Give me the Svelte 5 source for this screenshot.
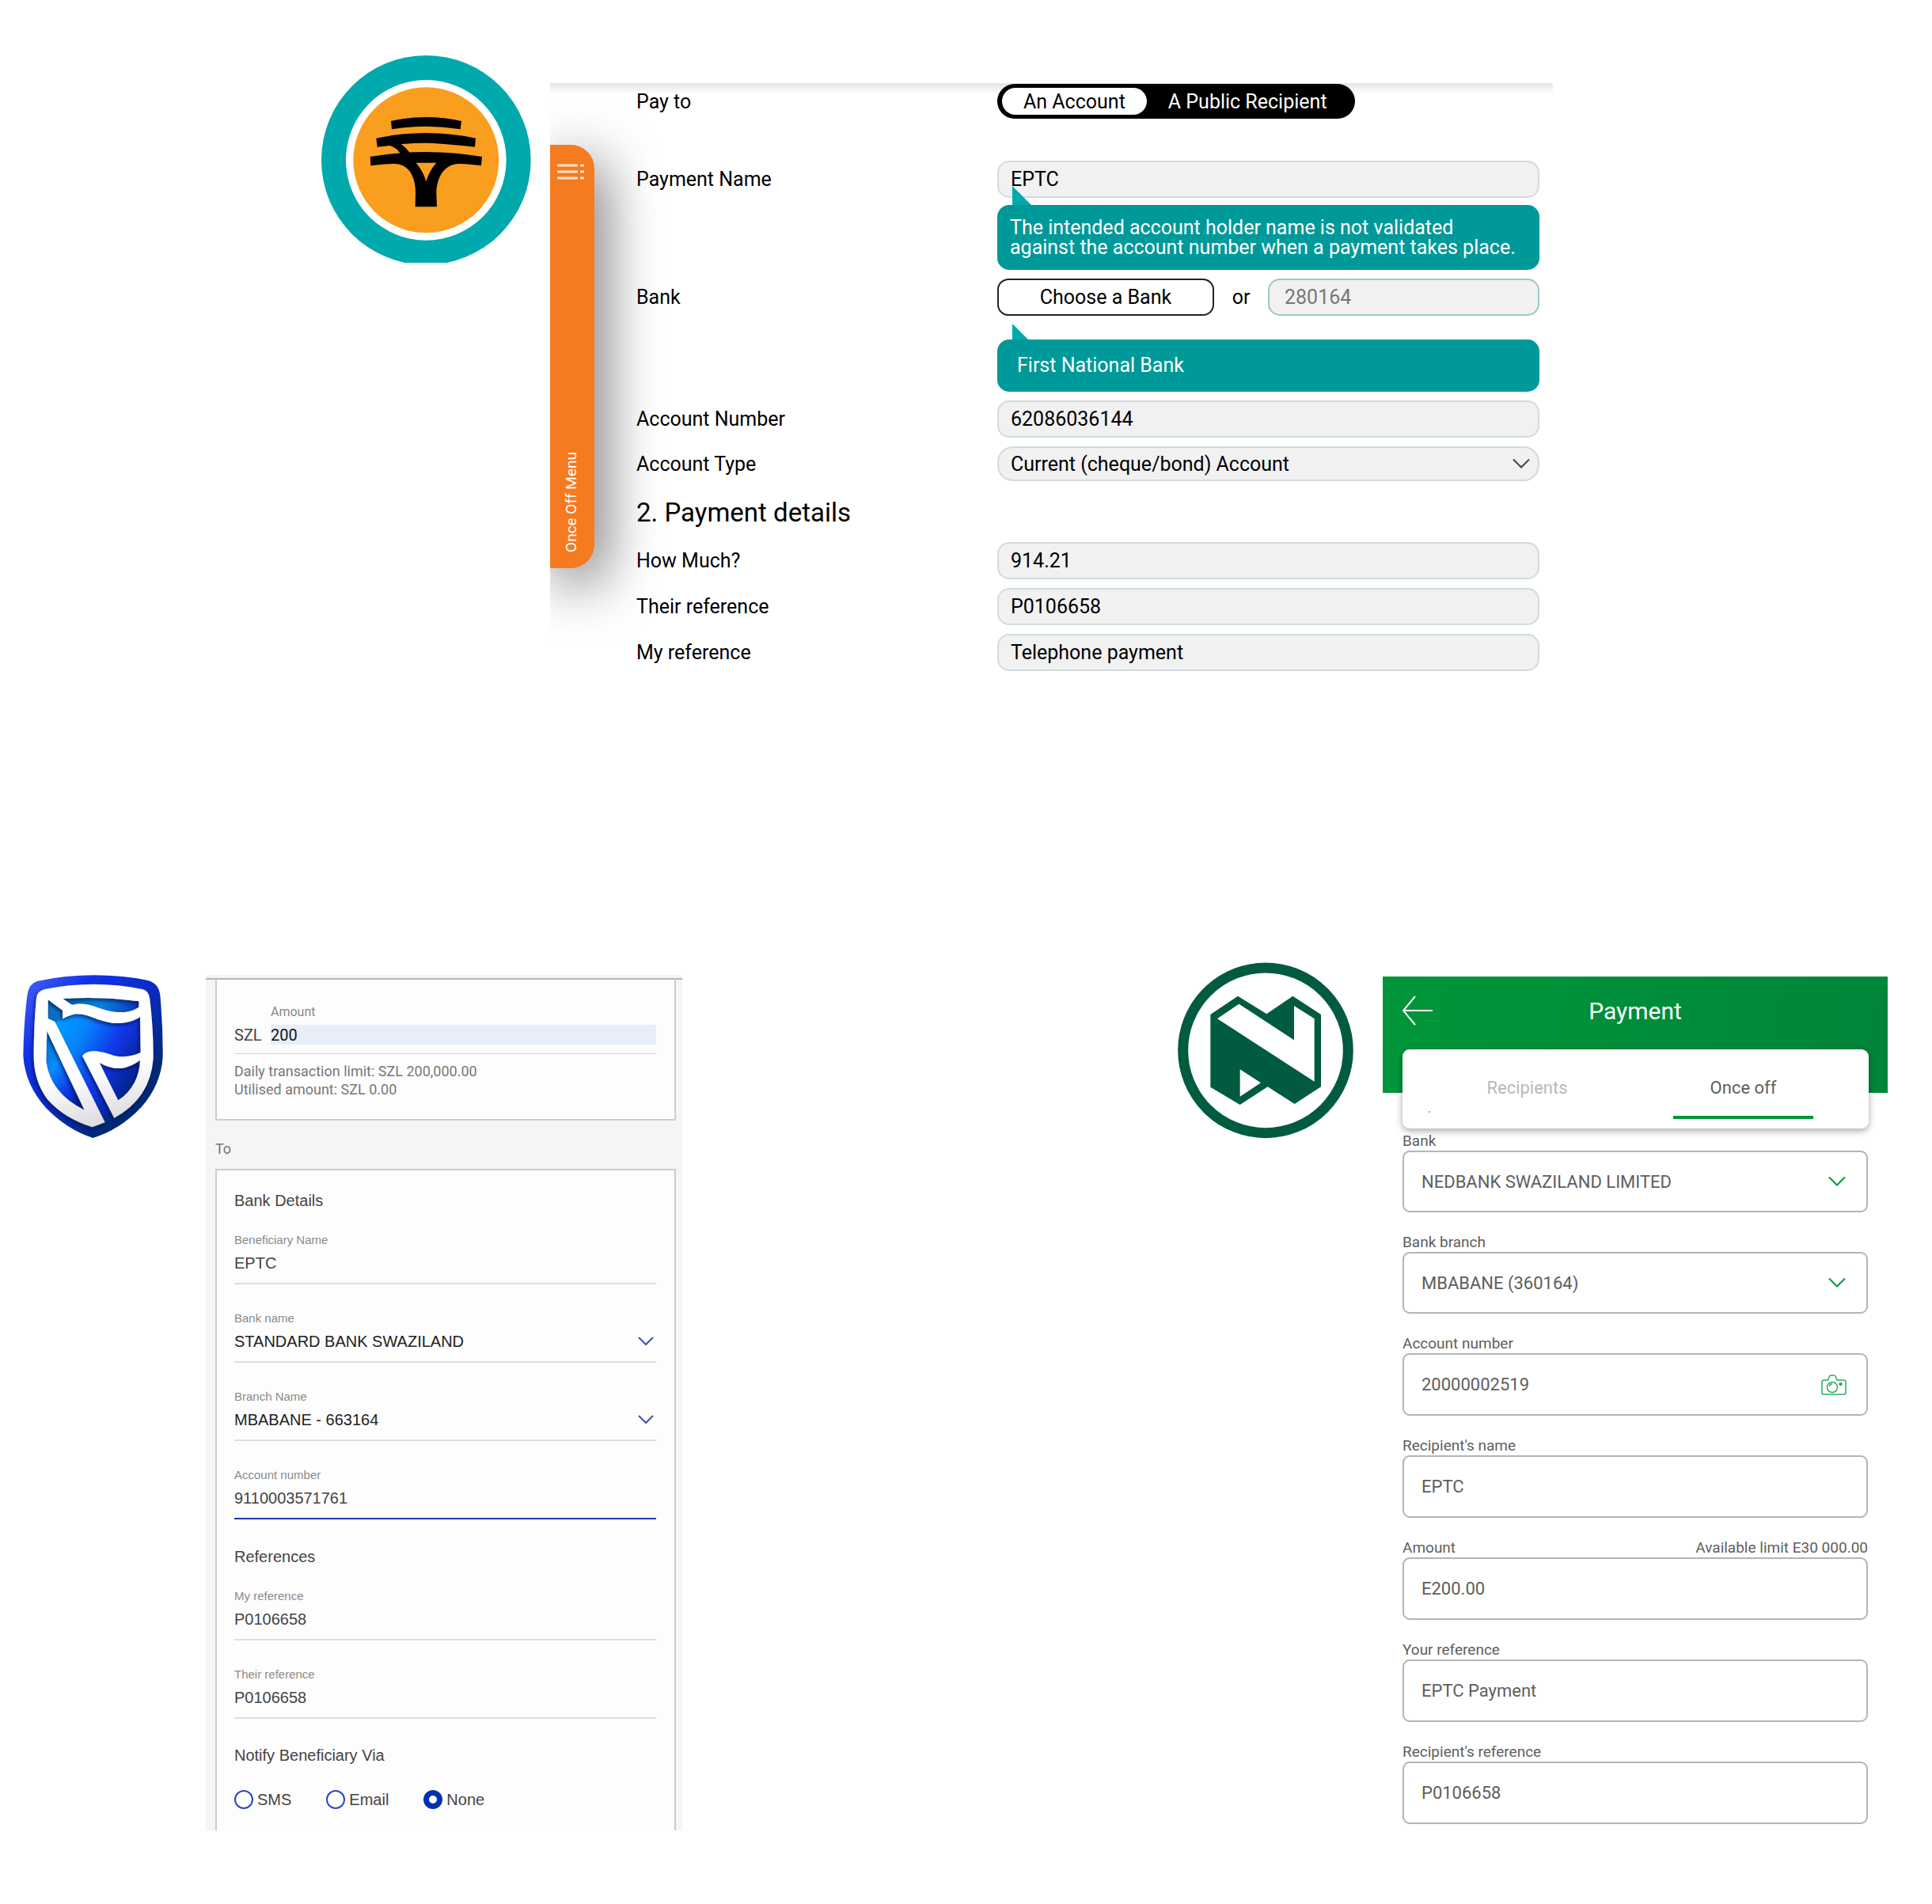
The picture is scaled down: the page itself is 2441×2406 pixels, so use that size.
<script>
  let payTo = $state('account');
  let accountType = $state('Current (cheque/bond) Account');
  let notify = $state('None');

  const paymentDetails = [
    { id: 'fnb-amount', label: 'How Much?', value: '914.21' },
    { id: 'fnb-their-ref', label: 'Their reference', value: 'P0106658' },
    { id: 'fnb-my-ref', label: 'My reference', value: 'Telephone payment' }
  ];

  const bankDetails = [
    { id: 'sb-name', label: 'Beneficiary Name', value: 'EPTC' },
    { id: 'sb-bank', label: 'Bank name', value: 'STANDARD BANK SWAZILAND', select: true },
    { id: 'sb-branch', label: 'Branch Name', value: 'MBABANE - 663164', select: true },
    { id: 'sb-account', label: 'Account number', value: '9110003571761', active: true }
  ];

  const references = [
    { id: 'sb-my-ref', label: 'My reference', value: 'P0106658' },
    { id: 'sb-their-ref', label: 'Their reference', value: 'P0106658' }
  ];

  const nedbankFields = [
    { id: 'ned-bank', label: 'Bank', value: 'NEDBANK SWAZILAND LIMITED', select: true },
    { id: 'ned-branch', label: 'Bank branch', value: 'MBABANE (360164)', select: true },
    { id: 'ned-account', label: 'Account number', value: '20000002519', camera: true },
    { id: 'ned-name', label: "Recipient's name", value: 'EPTC' },
    { id: 'ned-amount', label: 'Amount', value: 'E200.00', note: 'Available limit E30 000.00' },
    { id: 'ned-your-ref', label: 'Your reference', value: 'EPTC Payment' },
    { id: 'ned-their-ref', label: "Recipient's reference", value: 'P0106658' }
  ];
</script>

{#snippet lineField(f)}
  <div class="line-field" class:active={f.active}>
    <label for={f.id}>{f.label}</label>
    {#if f.select}
      <div class="select-wrap">
        <select id={f.id}><option>{f.value}</option></select>
        <svg class="chevron" viewBox="0 0 20 12" width="20" height="12" aria-hidden="true"><path d="M1 1l9 9 9-9" /></svg>
      </div>
    {:else}
      <input id={f.id} type="text" value={f.value} />
    {/if}
  </div>
{/snippet}

<main class="page">
  <section class="top">
    <svg class="fnb-logo" viewBox="48 60 795 786" role="img" aria-label="First National Bank">
      <circle cx="445" cy="457" r="397" fill="#00a9ac" />
      <circle cx="445" cy="457" r="304" fill="#fff" />
      <circle cx="445" cy="457" r="276" fill="#fa9e20" />
      <path d="M312 309Q445 279 579 309L575 340Q445 318 315 340Z" />
      <path d="M256 374Q445 334 633 374L630 407Q490 392 445 392Q400 392 350 396Q368 408 383 428L348 432Q330 408 308 402L260 407Z" />
      <path fill-rule="evenodd" d="M233 444Q445 408 657 444L654 478Q610 472 575 471C520 468 486 515 484 580L486 634H404L405 580C405 515 375 468 320 471Q280 472 235 478ZM407 467Q435 500 445 538Q455 500 484 467Z" />
    </svg>

    <div class="fnb">
      <button class="side-menu" type="button">
        <svg viewBox="0 0 34 20" width="34" height="20" aria-hidden="true">
          <path d="M0 2h26M29 2h5M0 10h26M29 10h5M0 18h26M29 18h5" stroke="#ffe3cf" stroke-width="3" />
        </svg>
        <span>Once Off Menu</span>
      </button>

      <form class="fnb-form">
        <div class="row pay-to">
          <span class="caption" id="pay-to">Pay to</span>
          <div class="toggle" role="group" aria-labelledby="pay-to">
            <button type="button" class:on={payTo === 'account'} onclick={() => (payTo = 'account')}>An Account</button>
            <button type="button" class:on={payTo === 'public'} onclick={() => (payTo = 'public')}>A Public Recipient</button>
          </div>
        </div>

        <div class="row">
          <label for="fnb-name">Payment Name</label>
          <input id="fnb-name" type="text" value="EPTC" />
        </div>
        <p class="tip name-tip">
          <svg viewBox="0 0 24 24" width="24" height="24" aria-hidden="true"><path d="M0 0V24H24Z" /></svg>
          The intended account holder name is not validated<br />against the account number when a payment takes place.
        </p>

        <div class="row">
          <label for="fnb-bank">Bank</label>
          <div class="bank-row">
            <button class="choose" type="button">Choose a Bank</button>
            <span>or</span>
            <input id="fnb-bank" class="code" type="text" value="280164" />
          </div>
        </div>
        <p class="tip bank-tip">
          <svg viewBox="0 0 20 20" width="20" height="20" aria-hidden="true"><path d="M0 0V20H20Z" /></svg>
          First National Bank
        </p>

        <div class="row">
          <label for="fnb-account">Account Number</label>
          <input id="fnb-account" type="text" value="62086036144" />
        </div>
        <div class="row">
          <label for="fnb-type">Account Type</label>
          <div class="select-wrap">
            <select id="fnb-type" bind:value={accountType}><option>Current (cheque/bond) Account</option></select>
            <svg class="chevron" viewBox="0 0 22 13" width="22" height="13" aria-hidden="true"><path d="M1 1l10 10L21 1" /></svg>
          </div>
        </div>

        <h2>2. Payment details</h2>
        {#each paymentDetails as f}
          <div class="row">
            <label for={f.id}>{f.label}</label>
            <input id={f.id} type="text" value={f.value} />
          </div>
        {/each}
      </form>
    </div>
  </section>

  <section class="bottom">
    <svg class="sb-logo" viewBox="57 63 531 618" role="img" aria-label="Standard Bank">
      <defs>
        <linearGradient id="sb-outer" x1="0" y1="0" x2="1" y2="1">
          <stop offset="0" stop-color="#4a63fa" />
          <stop offset="0.25" stop-color="#1233e6" />
          <stop offset="0.5" stop-color="#0a2bc4" />
          <stop offset="0.75" stop-color="#002a78" />
          <stop offset="1" stop-color="#00205c" />
        </linearGradient>
        <linearGradient id="sb-inner" gradientUnits="userSpaceOnUse" x1="190" y1="260" x2="510" y2="440">
          <stop offset="0" stop-color="#0099ff" />
          <stop offset="0.25" stop-color="#0684fb" />
          <stop offset="0.6" stop-color="#1236ea" />
          <stop offset="1" stop-color="#001f80" />
        </linearGradient>
        <linearGradient id="sb-top" x1="0" y1="0" x2="1" y2="0">
          <stop offset="0" stop-color="#005fae" />
          <stop offset="0.5" stop-color="#0583dc" />
          <stop offset="1" stop-color="#0d2fb4" />
        </linearGradient>
        <linearGradient id="sb-left" x1="0" y1="0" x2="0.6" y2="1">
          <stop offset="0" stop-color="#0069b8" />
          <stop offset="0.45" stop-color="#0a8cff" />
          <stop offset="0.8" stop-color="#0e35e0" />
          <stop offset="1" stop-color="#001f90" />
        </linearGradient>
        <linearGradient id="sb-white" x1="0.4" y1="0" x2="0.6" y2="1">
          <stop offset="0.6" stop-color="#fff" />
          <stop offset="1" stop-color="#d9d9de" />
        </linearGradient>
        <filter id="sb-shadow" x="-10%" y="-10%" width="120%" height="120%">
          <feDropShadow dx="-4" dy="8" stdDeviation="7" flood-color="#00124e" flood-opacity="0.7" />
        </filter>
      </defs>
      <path fill="url(#sb-outer)" d="M112 86Q220 64 325 64Q440 64 532 84Q572 96 577 140Q588 260 587 375Q580 480 505 565Q425 650 322 681Q225 650 145 568Q65 480 58 370Q60 240 74 135Q80 96 112 86Z" />
      <path fill="url(#sb-inner)" d="M125 135Q325 95 520 135L535 380L470 540L385 600L320 620L180 540L115 400Z" />
      <path fill="url(#sb-top)" d="M200 145Q350 135 505 155V200C470 215 440 215 415 212C350 205 310 170 235 180Z" />
      <path fill="url(#sb-left)" d="M140 255L300 590Q160 530 138 390Z" />
      <path fill="#0a6fc4" d="M150 150L207 190V230L175 245L150 232Z" />
      <path filter="url(#sb-shadow)" fill="url(#sb-white)" fill-rule="evenodd" d="M108 150Q112 123 140 117Q325 80 510 117Q535 123 538 155Q552 270 551 380Q540 530 403 605L282 370Q288 360 300 356C330 346 360 355 400 368C435 377 470 372 503 357L501 222C475 240 440 248 400 246C340 240 300 205 250 212Q225 218 207 229V197L152 157V228L178 240L368 622L320 640Q215 608 150 535Q98 465 98 370Q98 250 108 150ZM208 153Q350 143 497 163L496 185C470 203 440 205 415 204C350 200 310 160 243 176ZM148 275L290 575Q160 510 145 390ZM347 396Q390 420 430 417Q470 410 501 386Q500 430 480 470Q455 515 418 538Z" />
    </svg>

    <div class="sb">
      <div class="sb-card amount-card">
        <div class="amount">
          <label for="sb-amount">Amount</label>
          <span class="currency">SZL</span>
          <input id="sb-amount" type="text" value="200" />
        </div>
        <p>Daily transaction limit: SZL 200,000.00<br />Utilised amount: SZL 0.00</p>
      </div>

      <p class="to">To</p>

      <form class="sb-card details-card">
        <h3>Bank Details</h3>
        {#each bankDetails as f}{@render lineField(f)}{/each}
        <h3>References</h3>
        {#each references as f}{@render lineField(f)}{/each}
        <fieldset>
          <legend>Notify Beneficiary Via</legend>
          <div class="radios">
            {#each ['SMS', 'Email', 'None'] as option}
              <label><input type="radio" name="notify" value={option} bind:group={notify} />{option}</label>
            {/each}
          </div>
        </fieldset>
      </form>
    </div>

    <svg class="ned-logo" viewBox="54 44 666 668" role="img" aria-label="Nedbank">
      <circle cx="387" cy="378" r="313" fill="none" stroke="#005b41" stroke-width="39" />
      <path fill="#005b41" fill-rule="evenodd" d="M178 242L282 172L391 240L490 172L597 242V516L497 581L395 516L290 584L178 517ZM204 258L572 496V258L495 209V339L286 202ZM290 450V553L369 501Z" />
    </svg>

    <div class="ned">
      <header>
        <button type="button" aria-label="Back">
          <svg viewBox="0 0 38 38" width="38" height="38" aria-hidden="true"><path d="M16 1L1 19L16 37M1 19H38" /></svg>
        </button>
        <h1>Payment</h1>
      </header>
      <nav class="tabs">
        <button type="button">Recipients</button>
        <button type="button" class="current" aria-current="page">Once off</button>
      </nav>
      <form class="ned-form">
        {#each nedbankFields as f}
          <div class="ned-field">
            <div class="ned-label">
              <label for={f.id}>{f.label}</label>
              {#if f.note}<span>{f.note}</span>{/if}
            </div>
            <div class="select-wrap">
              {#if f.select}
                <select id={f.id}><option>{f.value}</option></select>
                <svg class="chevron" viewBox="0 0 22 13" width="22" height="13" aria-hidden="true"><path d="M1 1l10 10L21 1" /></svg>
              {:else}
                <input id={f.id} type="text" value={f.value} />
              {/if}
              {#if f.camera}
                <svg class="camera" viewBox="0 0 32 26" width="32" height="26" aria-hidden="true">
                  <path d="M3 7h5.500l1.500-4q.7-2 2.500-2h3.500q1.800 0 2.500 2l1.500 4h9q2 0 2 2v14q0 2-2 2H3q-2 0-2-2V9q0-2 2-2z" />
                  <circle cx="14" cy="16" r="6.500" />
                  <path d="M10.500 15q.5-3 3.500-3.500" />
                  <circle cx="24.500" cy="12" r="1.500" class="dot" />
                </svg>
              {/if}
            </div>
          </div>
        {/each}
      </form>
    </div>
  </section>
</main>

<style>
  :global(body) {
    background: #fff;
  }
  .page,
  .page * {
    box-sizing: border-box;
  }
  .page {
    font-family: Roboto, sans-serif;
    padding: 70px 0 90px;
  }
  p,
  h1,
  h2,
  h3 {
    margin: 0;
    font-weight: 400;
  }
  button,
  input,
  select {
    font: inherit;
    color: inherit;
    margin: 0;
    padding: 0;
    border: 0;
    background: none;
    outline: none;
    min-width: 0;
  }
  button {
    cursor: pointer;
  }
  select {
    appearance: none;
    width: 100%;
  }
  svg {
    display: block;
  }
  .select-wrap {
    position: relative;
  }
  .chevron {
    position: absolute;
    top: 50%;
    translate: 0 -50%;
    fill: none;
    stroke-width: 2;
    pointer-events: none;
  }

  /* First National Bank */
  .top {
    display: grid;
    grid-template-columns: 406fr 265fr 24fr 1267fr 479fr;
    align-items: start;
    margin-bottom: 365px;
  }
  .fnb-logo {
    grid-column: 2;
    width: 100%;
  }
  .fnb {
    grid-column: 4;
    margin-top: 35px;
    display: grid;
    grid-template-columns: 56px 1fr;
    gap: 53px;
    padding: 1px 17px 3px 0;
    overflow: hidden;
    background: linear-gradient(#e4e4e4, #fff 14px);
    font-size: 25px;
    color: #000;
  }
  .side-menu {
    margin: 77px 0 130px;
    background: #f57b20;
    border-radius: 0 30px 30px 0;
    box-shadow: 10px 20px 70px rgba(0, 0, 0, 0.6);
    display: flex;
    flex-direction: column;
    align-items: center;
    justify-content: space-between;
    padding: 24px 4px 20px 0;
    color: #fff;
    font-size: 19px;
  }
  .side-menu span {
    writing-mode: sideways-lr;
  }
  .fnb-form {
    position: relative;
    display: flex;
    flex-direction: column;
    gap: 11px;
  }
  .row {
    display: grid;
    grid-template-columns: 456px 1fr;
    align-items: center;
  }
  .pay-to {
    margin-bottom: 42px;
  }
  .toggle {
    justify-self: start;
    display: flex;
    padding: 5px 8px 5px 6px;
    height: 44px;
    border-radius: 22px;
    background: #000;
    color: #fff;
  }
  .toggle button {
    padding: 0 27px;
    border-radius: 17px;
  }
  .toggle .on {
    background: #fff;
    color: #000;
  }
  .row > input,
  .code {
    height: 47px;
    width: 100%;
    padding: 0 15px;
    border: 2px solid #d0dbde;
    border-radius: 15px;
    background: #f1f1f1;
  }
  .row select {
    height: 44px;
    padding: 0 15px;
    border: 2px solid #d0dbde;
    border-radius: 20px;
    background: #f1f1f1;
  }
  .row .chevron {
    right: 12px;
    stroke: #444;
  }
  .tip {
    position: relative;
    margin-left: 456px;
    border-radius: 15px;
    background: #009999;
    color: #fff;
    line-height: 25px;
  }
  .tip svg {
    position: absolute;
    left: 19px;
    bottom: 100%;
    fill: #00a9ac;
  }
  .name-tip {
    margin-top: -2px;
    padding: 16px 16px;
  }
  .bank-tip {
    margin-top: 19px;
    padding: 20px 25px 21px;
  }
  .bank-row {
    display: grid;
    grid-template-columns: 274fr 68fr 343fr;
    align-items: center;
    text-align: center;
  }
  .choose {
    height: 47px;
    border: 2px solid #222;
    border-radius: 14px;
  }
  .code {
    padding: 0 19px;
    border-color: #9cc7c7;
    color: #777;
  }
  h2 {
    margin: 9px 0 6px;
    font-size: 33px;
    line-height: 40px;
  }

  /* Lower row */
  .bottom {
    display: grid;
    grid-template-columns: 29fr 177fr 54fr 602fr 626fr 222fr 37fr 638fr 56fr;
    align-items: start;
  }

  /* Standard Bank */
  .sb-logo {
    grid-column: 2;
    width: 100%;
    margin-top: 16px;
  }
  .sb {
    grid-column: 4;
    margin-top: 16px;
    padding: 4px 8px 0 12px;
    background: linear-gradient(#f5f5f5 4px, #b4b4b4 4px, #b4b4b4 6px, #f5f5f5 6px);
    font-family: 'Liberation Sans', Arial, sans-serif;
    font-size: 20px;
    color: #444;
  }
  .sb-card {
    border: 2px solid #ccc;
    background: #fdfdfd;
    padding: 0 23px 0 22px;
  }
  .amount-card {
    border-top-color: #b4b4b4;
    padding-top: 29px;
    padding-bottom: 26px;
    font-family: Roboto, sans-serif;
  }
  .amount {
    display: grid;
    grid-template-columns: 46px 1fr;
    align-items: center;
    padding-bottom: 11px;
    border-bottom: 1px solid #d4d4d4;
  }
  .amount label {
    grid-column: 2;
    font-size: 16px;
    line-height: 24px;
    margin-bottom: 4px;
    color: #888;
  }
  .amount input {
    height: 25px;
    background: #e7eefb;
    color: #111;
  }
  .amount-card p {
    margin-top: 10px;
    font-size: 18px;
    line-height: 23px;
    color: #777;
  }
  .to {
    font-family: Roboto, sans-serif;
    font-size: 18px;
    line-height: 23px;
    padding: 24px 0 14px;
    color: #777;
  }
  .details-card {
    border-bottom: 0;
    padding-top: 26px;
  }
  h3,
  legend {
    font-size: 20px;
    line-height: 24px;
  }
  h3 {
    margin-bottom: 26px;
  }
  .line-field {
    border-bottom: 2px solid #dedede;
    padding-bottom: 13px;
    margin-bottom: 31px;
  }
  .line-field.active {
    border-bottom-color: #2037b0;
    margin-bottom: 35px;
  }
  .line-field > label {
    display: block;
    font-size: 15px;
    line-height: 24px;
    margin-bottom: 5px;
    color: #8a8a8a;
  }
  .line-field input,
  .line-field select {
    display: block;
    width: 100%;
    height: 24px;
  }
  .line-field select {
    color: #222;
  }
  .line-field .chevron {
    right: 3px;
    stroke: #3850b8;
  }
  fieldset {
    border: 0;
    margin: 0;
    padding: 0 0 26px;
  }
  legend {
    padding: 3px 0 31px;
  }
  .radios {
    display: flex;
    gap: 44px;
  }
  .radios label {
    display: flex;
    align-items: center;
    gap: 5px;
    line-height: 26px;
  }
  .radios input {
    appearance: none;
    width: 24px;
    height: 24px;
    border: 2px solid #2e48b8;
    border-radius: 50%;
    background: #fff;
  }
  .radios input:checked {
    border: 7px solid #0430b0;
  }

  /* Nedbank */
  .ned-logo {
    grid-column: 6;
    width: 100%;
  }
  .ned {
    grid-column: 8;
    margin-top: 18px;
    color: #5e5e5e;
    font-size: 22px;
  }
  .ned header {
    height: 147px;
    padding: 24px 25px 0;
    background: linear-gradient(100deg, #009639, #00853a);
    color: #fff;
    display: grid;
    grid-template-columns: 38px 1fr 38px;
    align-items: start;
  }
  header path {
    fill: none;
    stroke: #fff;
    stroke-width: 2;
  }
  h1 {
    font-size: 30px;
    line-height: 40px;
    text-align: center;
  }
  .tabs {
    position: relative;
    display: flex;
    justify-content: space-around;
    gap: 96px;
    height: 100px;
    margin: -55px 24px 0 25px;
    padding: 0 70px 0 69px;
    border-radius: 9px;
    background: #fff;
    box-shadow: 0 3px 10px rgba(0, 0, 0, 0.35);
  }
  .tabs::before {
    content: '';
    position: absolute;
    left: 33px;
    bottom: 20px;
    width: 2px;
    height: 2px;
    background: #aaa;
  }
  .tabs button {
    flex: 1;
    height: 88px;
    padding-top: 12px;
    border-bottom: 4px solid transparent;
    color: #b8b8b8;
  }
  .tabs .current {
    border-color: #009639;
    color: #5e5e5e;
  }
  .ned-form {
    display: flex;
    flex-direction: column;
    gap: 26px;
    margin: 4px 25px 0;
  }
  .ned-label {
    display: flex;
    justify-content: space-between;
    font-size: 19px;
    line-height: 24px;
  }
  .ned-field input,
  .ned-field select {
    display: block;
    width: 100%;
    height: 79px;
    padding: 0 22px;
    border: 2px solid #b4b4b4;
    border-radius: 9px;
    background: #fff;
  }
  .ned-field select {
    height: 78px;
  }
  .ned-field .chevron {
    right: 28px;
    stroke: #009639;
  }
  .camera {
    position: absolute;
    right: 27px;
    top: 50%;
    translate: 0 -50%;
    fill: none;
    stroke: #2fab60;
    stroke-width: 1.500;
  }
  .camera .dot {
    fill: #2fab60;
  }
</style>
